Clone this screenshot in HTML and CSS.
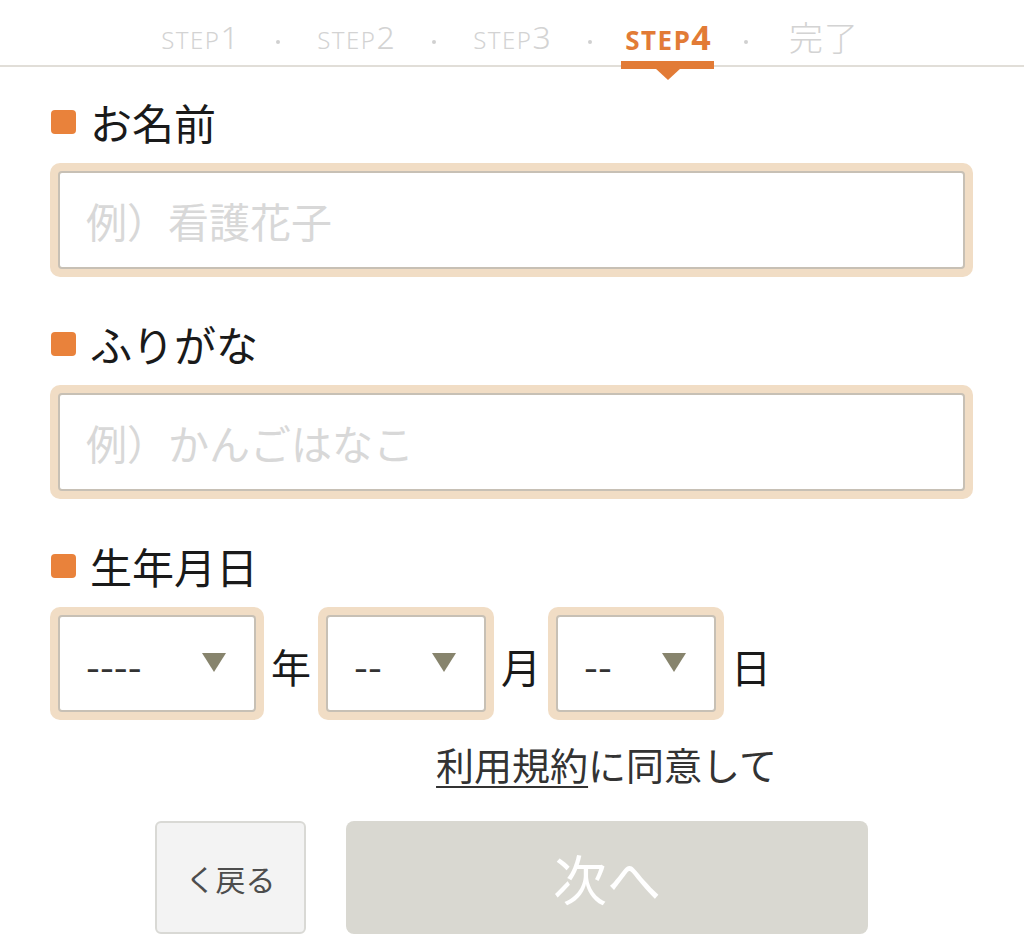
FILE: index.html
```html
<!DOCTYPE html>
<html lang="ja">
<head>
<meta charset="utf-8">
<title>STEP4</title>
<link rel="stylesheet" href="styles.css">
</head>
<body>
<header class="stepper">
  <div class="step"><span class="en">STEP</span><span class="num">1</span></div>
  <div class="step"><span class="en">STEP</span><span class="num">2</span></div>
  <div class="step"><span class="en">STEP</span><span class="num">3</span></div>
  <div class="step active"><span class="en">STEP</span><span class="num">4</span></div>
  <div class="step last"><span class="ja">完了</span></div>
</header>

<main class="form">
  <section class="field">
    <h2 class="label">お名前</h2>
    <div class="ring"><input class="text-input" type="text" placeholder="例）看護花子"></div>
  </section>

  <section class="field">
    <h2 class="label">ふりがな</h2>
    <div class="ring"><input class="text-input" type="text" placeholder="例）かんごはなこ"></div>
  </section>

  <section class="field">
    <h2 class="label">生年月日</h2>
    <div class="date-row">
      <div class="ring sel-ring year">
        <div class="select"><span class="sel-val">----</span><svg class="caret" width="24" height="19" viewBox="0 0 24 19"><polygon points="0,0 24,0 12,19" fill="#87846d"/></svg></div>
      </div>
      <span class="unit">年</span>
      <div class="ring sel-ring">
        <div class="select"><span class="sel-val">--</span><svg class="caret" width="24" height="19" viewBox="0 0 24 19"><polygon points="0,0 24,0 12,19" fill="#87846d"/></svg></div>
      </div>
      <span class="unit">月</span>
      <div class="ring sel-ring">
        <div class="select"><span class="sel-val">--</span><svg class="caret" width="24" height="19" viewBox="0 0 24 19"><polygon points="0,0 24,0 12,19" fill="#87846d"/></svg></div>
      </div>
      <span class="unit">日</span>
    </div>
  </section>

  <p class="agree"><a class="terms" href="#">利用規約</a>に同意して</p>

  <div class="actions">
    <button class="btn-back" type="button">く戻る</button>
    <button class="btn-next" type="button">次へ</button>
  </div>
</main>
</body>
</html>
```

FILE: styles.css
```css
* { box-sizing: border-box; }

body {
  margin: 0;
  background: #ffffff;
  color: #1a1a1a;
  font-family: "Noto Sans CJK JP", "Noto Sans", sans-serif;
}

/* ---------- stepper ---------- */
.stepper {
  display: grid;
  grid-template-columns: repeat(5, 156px);
  justify-content: center;
  height: 67px;
  border-bottom: 2px solid #e1ded8;
}

.step {
  position: relative;
  text-align: center;
  padding-top: 20px;
  line-height: 34px;
  color: #d3d3d3;
  font-family: "Noto Sans", "Noto Sans CJK JP", sans-serif;
  font-weight: 300;
  white-space: nowrap;
}

.step .en {
  font-size: 24px;
  letter-spacing: 1.5px;
}

.step .num {
  font-size: 32px;
}

.step .ja {
  font-family: "Noto Sans CJK JP", sans-serif;
  font-size: 34px;
  font-weight: 300;
  letter-spacing: 1px;
}

.step:not(.last)::after {
  content: "";
  position: absolute;
  right: -2px;
  top: 40px;
  width: 4px;
  height: 4px;
  border-radius: 50%;
  background: #d0d0d0;
}

.step.active {
  color: #e27b36;
  font-weight: 700;
}

.step.active .en {
  font-size: 26px;
  letter-spacing: 1.5px;
}

.step.active .num {
  font-size: 34px;
}

.step.active::before {
  content: "";
  position: absolute;
  left: 50%;
  top: 61px;
  width: 93px;
  height: 8px;
  margin-left: -47px;
  background: #e27b36;
  z-index: 2;
}

.step.active .num::after {
  content: "";
  position: absolute;
  left: 50%;
  top: 68px;
  margin-left: -13px;
  border-left: 13px solid transparent;
  border-right: 13px solid transparent;
  border-top: 12px solid #e27b36;
  z-index: 2;
}

/* ---------- form ---------- */
.form {
  padding: 0 51px 0 50px;
}

.field {
  margin-top: 43px;
}

.field:first-child {
  margin-top: 31px;
}

.label {
  display: flex;
  align-items: center;
  gap: 14px;
  margin: 0 0 17px;
  height: 48px;
  font-size: 42px;
  line-height: 48px;
  font-weight: 400;
  color: #1a1a1a;
}

.label::before {
  content: "";
  width: 25px;
  height: 24px;
  margin-left: 1px;
  border-radius: 4px;
  background: #e9823b;
  flex: none;
}

.ring {
  background: #f1ddc5;
  padding: 8px;
  border-radius: 10px;
}

.text-input {
  display: block;
  width: 100%;
  height: 98px;
  border: 2px solid #c7c0b5;
  border-radius: 4px;
  background: #fff;
  padding: 0 0 0 26px;
  font-family: "Noto Sans CJK JP", sans-serif;
  font-size: 41px;
  color: #333;
  outline: none;
}

.text-input::placeholder {
  color: #d8d8d8;
}

/* ---------- date ---------- */
.date-row {
  display: flex;
  align-items: center;
  gap: 7px;
}

.sel-ring {
  width: 176px;
  flex: none;
}

.sel-ring.year {
  width: 214px;
}

.select {
  display: flex;
  align-items: center;
  justify-content: space-between;
  height: 97px;
  border: 2px solid #c7c0b5;
  border-radius: 4px;
  background: #fff;
  padding: 0 28px 0 26px;
}

.sel-val {
  font-size: 40px;
  color: #333;
  line-height: 1;
  margin-top: 2px;
}

.caret {
  display: block;
  margin-top: -2px;
}

.unit {
  font-size: 40px;
  line-height: 48px;
  color: #1a1a1a;
  margin-top: 4px;
}

/* ---------- agree ---------- */
.agree {
  margin: 19px 0 0;
  padding-left: 190px;
  text-align: center;
  font-size: 38px;
  line-height: 50px;
  color: #333;
}

.terms {
  color: #333;
  text-decoration: underline;
  text-decoration-thickness: 2px;
  text-underline-offset: 6px;
}

/* ---------- actions ---------- */
.actions {
  display: flex;
  justify-content: center;
  gap: 40px;
  margin-top: 32px;
}

.btn-back {
  width: 151px;
  height: 113px;
  border: 2px solid #d9d9d5;
  border-radius: 6px;
  background: #f3f3f3;
  font-family: "Noto Sans CJK JP", sans-serif;
  font-size: 30px;
  color: #4d4d4d;
  padding: 0;
}

.btn-next {
  width: 522px;
  height: 113px;
  border: none;
  border-radius: 8px;
  background: #d9d8d1;
  font-family: "Noto Sans CJK JP", sans-serif;
  font-size: 54px;
  color: #ffffff;
  padding: 0;
}
```
